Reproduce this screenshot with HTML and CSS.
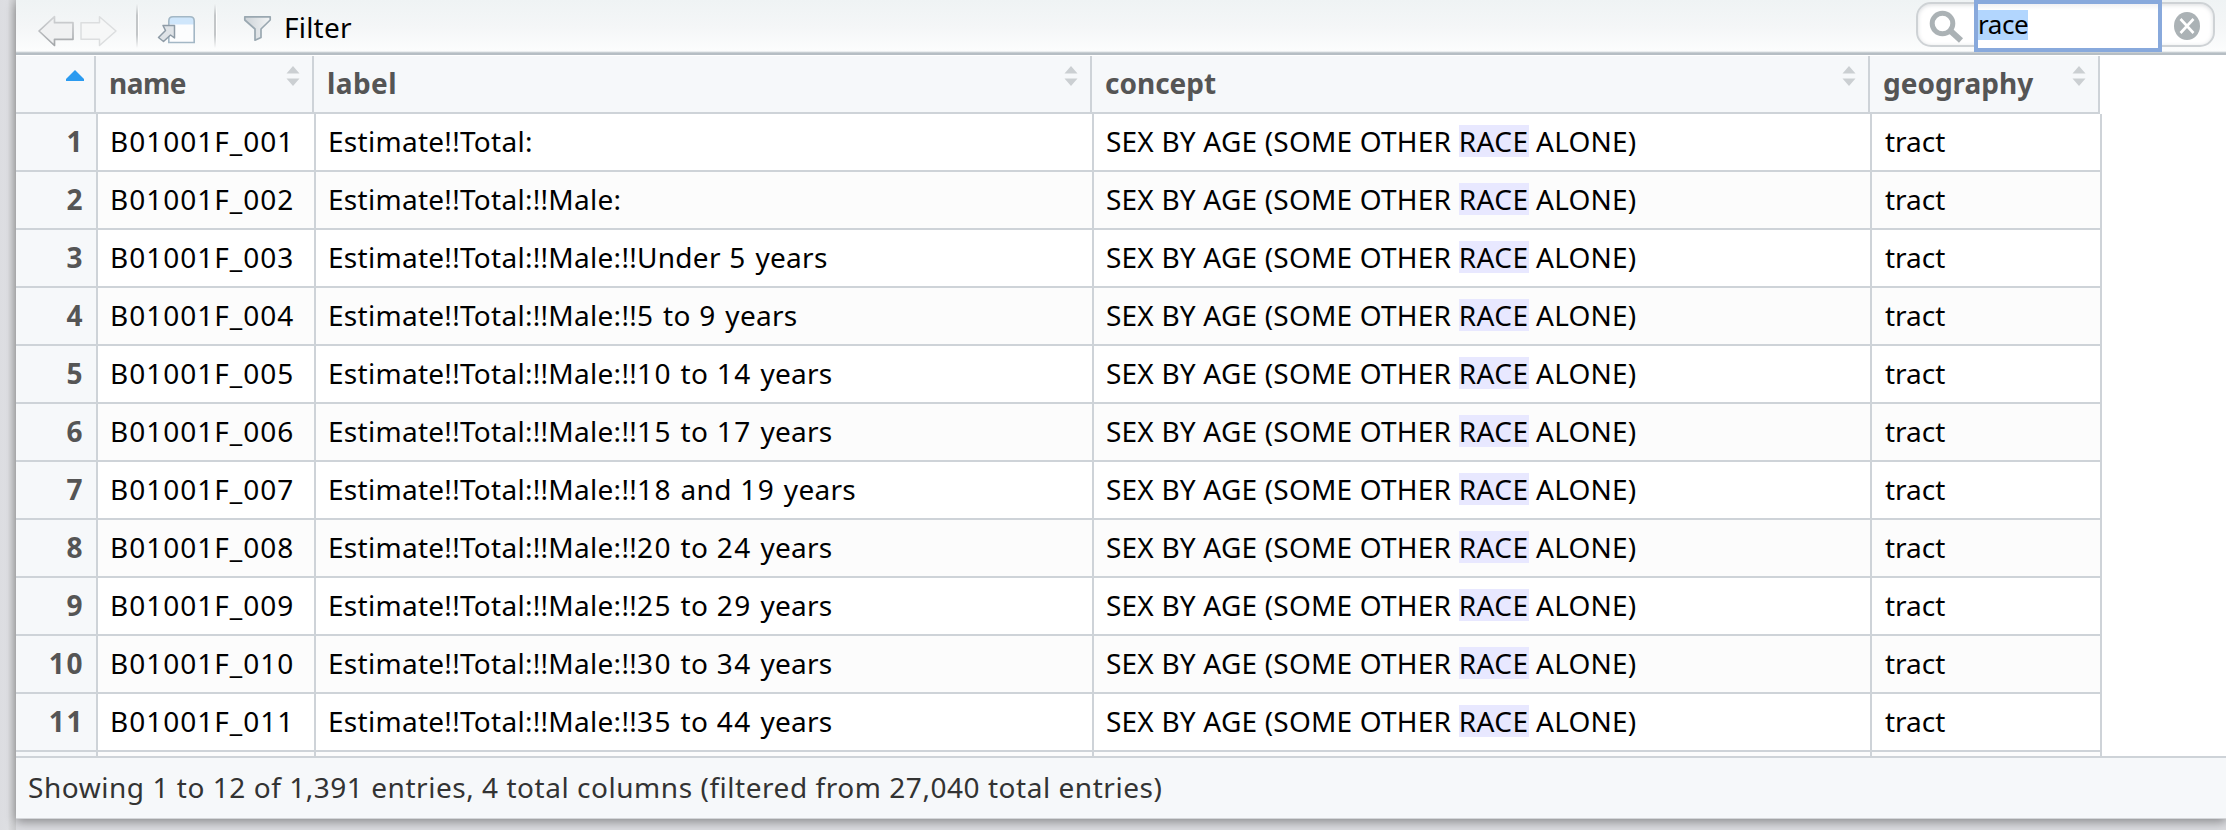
FILE: index.html
```html
<!DOCTYPE html>
<html lang="en">
<head>
<meta charset="utf-8">
<title>Data Viewer</title>
<link rel="stylesheet" href="styles.css">
</head>
<body>
<main class="panel">
  <div class="toolbar">
    <svg class="icon-nav" width="84" height="34" viewBox="0 0 84 34">
      <defs>
        <linearGradient id="edge" x1="0" y1="0" x2="0" y2="1"><stop offset="0" stop-color="#d2d4d6"/><stop offset="1" stop-color="#a3a6a9"/></linearGradient>
        <linearGradient id="steel" x1="0" y1="0" x2="1" y2="0"><stop offset="0" stop-color="#cdd3d8"/><stop offset="1" stop-color="#f3f5f6"/></linearGradient>
      </defs>
      <path d="M2 17 17.5 2.700V8.700H36V25.300H17.500V31.500Z" fill="#f0f1f2" stroke="url(#edge)" stroke-width="1.700" stroke-linejoin="round"/>
      <path d="M79 17 62.500 2.700V8.700H44V25.300H62.500V31.500Z" fill="#f6f7f7" stroke="#dcdedf" stroke-width="1.500" stroke-linejoin="round"/>
    </svg>
    <span class="divider divider-first"></span>
    <svg class="icon-popout" width="40" height="32" viewBox="0 0 40 32">
      <path d="M11.800 27.500V6Q11.800 1.800 16 1.800H33Q37.200 1.800 37.200 6V27.500Z" fill="#fcfdfe"/>
      <path d="M11.800 9.500V6Q11.800 1.800 16 1.800H33Q37.200 1.800 37.200 6V9.500Z" fill="#cfe6fb"/>
      <path d="M11.800 27.500V6Q11.800 1.800 16 1.800H33Q37.200 1.800 37.200 6V27.500Z" fill="none" stroke="#a3b7c5" stroke-width="1.600"/>
      <path d="M6 10.500H17.500V23L13.500 20 6.500 26.500 1.500 22.500 8.500 15.500Z" fill="#dfe3e7" stroke="#8e9ba6" stroke-width="1.500" stroke-linejoin="round"/>
    </svg>
    <span class="divider divider-second"></span>
    <svg class="icon-funnel" width="30" height="28" viewBox="0 0 30 28">
      <path d="M1.800 1.800H27.200V5L18 14V22.500L12 25.200V14L1.800 5Z" fill="url(#steel)" stroke="#9aa8b1" stroke-width="1.700" stroke-linejoin="round"/>
    </svg>
    <span class="filter-label">Filter</span>
    <div class="search">
      <svg class="icon-search" width="36" height="34" viewBox="0 0 36 34"><circle cx="13.500" cy="13.500" r="10.300" fill="none" stroke="#abb2b5" stroke-width="5"/><path d="M20.500 20 32 30.500" stroke="#abb2b5" stroke-width="6"/></svg>
      <div class="search-input"><span class="selection">race</span></div>
      <svg class="icon-clear" width="26" height="28" viewBox="0 0 26 28"><ellipse cx="13" cy="14" rx="13" ry="14" fill="#abb2b5"/><path d="M6.500 7 19.500 21M19.500 7 6.500 21" stroke="#fff" stroke-width="2.600"/></svg>
    </div>
  </div>

  <div class="head grid">
    <div class="th th-index"><svg width="18" height="11" viewBox="0 0 18 11"><path d="M9 0 18 9V11H0V9Z" fill="#2b9bf0"/></svg></div>
    <div class="th th-name">name</div>
    <div class="th th-label">label</div>
    <div class="th">concept</div>
    <div class="th">geography</div>
  </div>
  <div class="body" id="rows"></div>
  <footer class="status">Showing 1 to 12 of 1,391 entries, 4 total columns (filtered from 27,040 total entries)</footer>
</main>
<script src="rows.js"></script>
</body>
</html>
```
FILE: styles.css
```css
* { box-sizing: border-box; }

body {
  margin: 0;
  width: 2226px;
  height: 830px;
  overflow: hidden;
  padding-left: 16px;
  background: linear-gradient(90deg, #dcdde1 0, #dedfe3 8px, #d9dadd 9px, #cbccce 16px, #dcdde1 16px);
  font-family: "Noto Sans", "Open Sans", sans-serif;
  font-size: 28px;
  color: #000;
}

.panel {
  display: flex;
  flex-direction: column;
  height: 819px;
  background: #fff;
  border-bottom: 1px solid #d4d6d9;
  box-shadow: 0 3px 10px rgba(0, 0, 0, .38);
}

.toolbar {
  display: flex;
  align-items: flex-start;
  flex: none;
  height: 56px;
  background: linear-gradient(#eff3f4 0, #f4f6f7 26px, #fcfdfd 51px, #d9dee1 52px, #b6bec4 53px, #b6bec4 55px, #fff 55px);
}

.icon-nav { margin: 14px 0 0 21px; }
.divider {
  width: 3px;
  height: 44px;
  margin-top: 4px;
  background: linear-gradient(90deg, #c3c6c8 0 2px, #fff 2px);
  -webkit-mask: linear-gradient(transparent, #000 25%, #000 70%, transparent);
  mask: linear-gradient(transparent, #000 25%, #000 70%, transparent);
}
.divider-first { margin-left: 15px; }
.icon-popout { margin: 15px 0 0 18px; }
.divider-second { margin-left: 17px; }
.icon-funnel { margin: 15px 0 0 26px; }
.filter-label { margin: 7px 0 0 11px; line-height: 40px; letter-spacing: .2px; }

.search {
  display: flex;
  align-items: flex-start;
  width: 299px;
  height: 45px;
  margin: 2px 11px 0 auto;
  border: 2px solid #ced2d5;
  border-radius: 15px;
  background: #fff;
  box-shadow: inset 0 1px 4px rgba(70, 80, 95, .2);
}
.icon-search { margin: 6px 0 0 11px; }
.search-input {
  width: 188px;
  height: 52px;
  margin: -4px 0 0 9px;
  border: 4px solid #88a9dc;
  padding-top: 6px;
  background: linear-gradient(#f0f0f3, #fff 6px);
}
.selection {
  display: block;
  width: 50px;
  height: 30px;
  line-height: 28px;
  font-size: 26px;
  letter-spacing: -.4px;
  background: #b2d6fe;
}
.icon-clear { margin: 8px 0 0 12px; }

.grid { display: grid; flex: none; }
.head { grid-template-columns: 80px 218px 778px 778px 230px; height: 58px; }
.th {
  position: relative;
  padding-left: 13px;
  border-right: 2px solid #ced3d8;
  border-bottom: 2px solid #ced3d8;
  background: #f6f8fa;
  color: #555;
  font-weight: 700;
  line-height: 54px;
}
.th-index { display: flex; justify-content: flex-end; align-items: flex-start; padding: 14px 10px 0 0; }
.th-name { letter-spacing: -.5px; }
.th-label { letter-spacing: .4px; }
.sort { position: absolute; top: 10px; right: 12px; }

.body { flex: 1; min-height: 0; overflow: hidden; }
.row { grid-template-columns: 82px 218px 778px 778px 230px; height: 58px; }
.row:nth-child(even) { background: #fcfcfc; width: 2086px; }
.td {
  padding-left: 12px;
  border-right: 2px solid #ced3d8;
  border-bottom: 2px solid #ced3d8;
  line-height: 54px;
  white-space: nowrap;
}
.td-index {
  padding: 0 12px 0 0;
  text-align: right;
  background: #f6f8fa;
  color: #555;
  font-weight: 700;
  letter-spacing: 1.6px;
}
.td-name { letter-spacing: 1px; }
.td-label { letter-spacing: .28px; word-spacing: 1px; }
.num { letter-spacing: 1.5px; }
.td-concept { letter-spacing: .2px; }
.td-geo { padding-left: 13px; }
.hit { display: inline-block; line-height: 32px; letter-spacing: .5px; background: #e8e8ff; }

.status {
  flex: none;
  height: 62px;
  padding-left: 12px;
  border-top: 2px solid #ced3d8;
  background: #f6f8fa;
  color: #333;
  line-height: 59px;
  letter-spacing: .54px;
}
```
FILE: rows.js
```javascript
const labels = [
  "",
  "!!Male:",
  "!!Male:!!Under 5 years",
  "!!Male:!!5 to 9 years",
  "!!Male:!!10 to 14 years",
  "!!Male:!!15 to 17 years",
  "!!Male:!!18 and 19 years",
  "!!Male:!!20 to 24 years",
  "!!Male:!!25 to 29 years",
  "!!Male:!!30 to 34 years",
  "!!Male:!!35 to 44 years"
];

const spaceNumbers = (text) => text.replace(/\d+/g, '<span class="num">$&</span>');

document.getElementById("rows").innerHTML = labels.map((label, i) => `
  <div class="grid row">
    <div class="td td-index">${i + 1}</div>
    <div class="td td-name">B01001F_${String(i + 1).padStart(3, "0")}</div>
    <div class="td td-label">Estimate!!Total:${spaceNumbers(label)}</div>
    <div class="td td-concept">SEX BY AGE (SOME OTHER <span class="hit">RACE</span> ALONE)</div>
    <div class="td td-geo">tract</div>
  </div>`).join("") + `
  <div class="grid row">
    <div class="td td-index"></div><div class="td"></div><div class="td"></div><div class="td"></div><div class="td"></div>
  </div>`;

document.querySelectorAll(".th:not(.th-index)").forEach((cell) => {
  cell.insertAdjacentHTML("beforeend",
    '<svg class="sort" width="14" height="20" viewBox="0 0 14 20"><path d="M7 0 13.500 7.500H.5ZM.5 12.500H13.500L7 20Z" fill="#cbcfd2"/></svg>');
});
```
